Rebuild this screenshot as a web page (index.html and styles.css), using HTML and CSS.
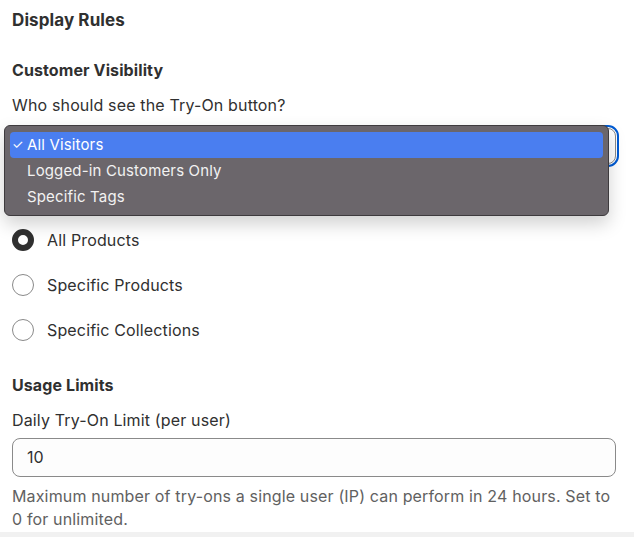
FILE: index.html
```html
<!DOCTYPE html>
<html lang="en">
<head>
    <meta charset="UTF-8">
    <meta name="viewport" content="width=device-width, initial-scale=1.0">
    <title>Display Rules</title>
    <link rel="stylesheet" href="styles.css">
</head>
<body>
    <div class="card">
        <h2 class="card-title">Display Rules</h2>

        <h3 class="section-title">Customer Visibility</h3>
        <label class="field-label" for="visibility">Who should see the Try-On button?</label>
        <div class="select-wrap">
            <div class="select" id="visibility"></div>
            <ul class="menu">
                <li class="menu-item active"><span class="check">✓</span>All Visitors</li>
                <li class="menu-item">Logged-in Customers Only</li>
                <li class="menu-item">Specific Tags</li>
            </ul>
        </div>

        <!-- product visibility heading sits under the open menu -->
        <div class="covered-gap"></div>
        <div class="radio-list">
            <label class="radio-row"><span class="radio checked"></span>All Products</label>
            <label class="radio-row"><span class="radio"></span>Specific Products</label>
            <label class="radio-row"><span class="radio"></span>Specific Collections</label>
        </div>

        <h3 class="section-title usage-title">Usage Limits</h3>
        <label class="field-label" for="limit">Daily Try-On Limit (per user)</label>
        <div class="text-input" id="limit">10</div>
        <p class="help">Maximum number of try-ons a single user (IP) can perform in 24 hours. Set to 0 for unlimited.</p>
    </div>
</body>
</html>
```

FILE: styles.css
```css
body {
    margin: 0;
    padding: 0;
    font-family: 'Inter', 'Noto Sans', sans-serif;
    color: #303030;
    background-color: #f1f1f1;
}
.card {
    background-color: #ffffff;
    padding: 10px 18px 0 12px;
    height: 522px;
}
.card-title {
    margin: 0;
    font-size: 17px;
    line-height: 20px;
    font-weight: 650;
    letter-spacing: 0.1px;
}
.section-title {
    margin: 30px 0 0;
    font-size: 16px;
    line-height: 20px;
    font-weight: 650;
    letter-spacing: 0.1px;
}
.field-label {
    display: block;
    margin-top: 15px;
    font-size: 16px;
    line-height: 20px;
    letter-spacing: 0.15px;
}
.select-wrap {
    position: relative;
    margin-top: 13px;
}
.select {
    height: 34px;
    border: 1px solid #8a8a8a;
    border-radius: 8px;
    outline: 2px solid #005bd3;
    outline-offset: 1px;
}
.menu {
    position: absolute;
    left: -8px;
    top: -3px;
    width: 593px;
    margin: 0;
    padding: 6px 5px 5px;
    list-style: none;
    background-color: #6b666b;
    border: 1px solid #3e3b3e;
    border-radius: 6px;
    box-shadow: 0 8px 18px rgba(0, 0, 0, 0.18);
}
.menu-item {
    box-sizing: border-box;
    display: flex;
    align-items: center;
    height: 26px;
    padding: 0 0 2px 17px;
    font-size: 15px;
    letter-spacing: 0.15px;
    color: #f2f2f2;
    border-radius: 4px;
}
.menu-item.active {
    background-color: #4a7ef0;
    color: #ffffff;
    padding-left: 2px;
}
.check {
    width: 15px;
    font-size: 13px;
}
.covered-gap {
    height: 47px;
}
.radio-list {
    margin-top: 6px;
}
.radio-row {
    display: flex;
    align-items: center;
    gap: 13px;
    height: 45px;
    font-size: 16px;
    letter-spacing: 0.15px;
}
.radio {
    box-sizing: border-box;
    width: 22px;
    height: 22px;
    border-radius: 50%;
    border: 1px solid #8a8a8a;
    background-color: #ffffff;
}
.radio.checked {
    border: 6px solid #303030;
}
.usage-title {
    margin-top: 23px;
}
.text-input {
    box-sizing: border-box;
    margin-top: 8px;
    height: 39px;
    border: 1px solid #8a8a8a;
    border-radius: 8px;
    padding-left: 14px;
    font-size: 16px;
    line-height: 37px;
    background-color: #fdfdfd;
}
.help {
    margin: 8px 0 0;
    font-size: 16px;
    line-height: 23px;
    letter-spacing: 0.15px;
    color: #616161;
}
```
